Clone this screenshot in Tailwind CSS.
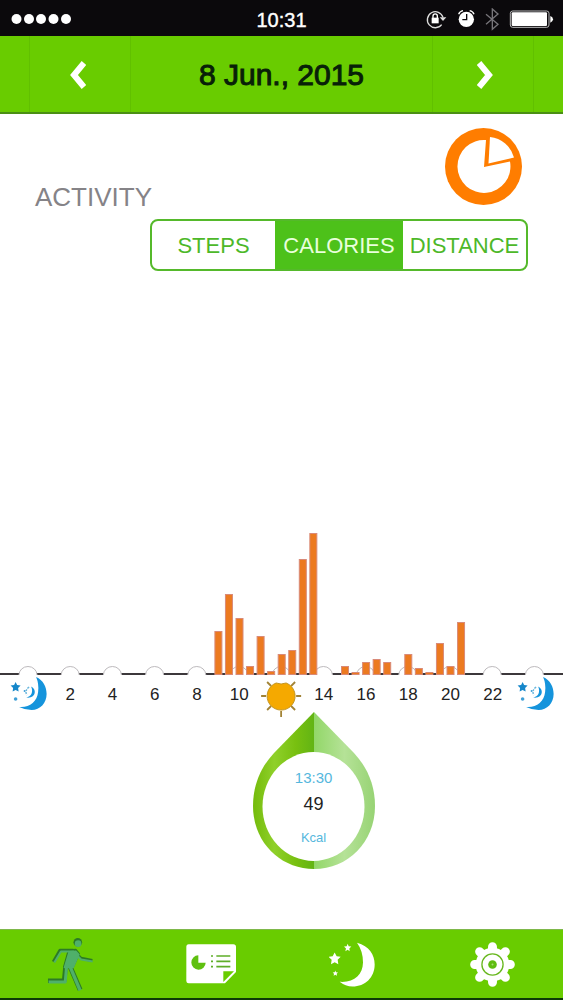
<!DOCTYPE html>
<html lang="en">
<head>
<meta charset="utf-8">
<meta name="viewport" content="width=device-width, initial-scale=1">
<title>Activity</title>
<script src="https://cdn.jsdelivr.net/npm/@tailwindcss/browser@4"></script>
</head>
<body class="flex min-h-screen flex-col bg-white font-['Liberation_Sans',Arial,sans-serif] text-[#222]">

  <!-- Status bar -->
  <div class="grid h-9 grid-cols-3 items-center bg-[#0b090c] pt-1 text-white">
    <svg class="ml-[11px] h-3 w-[61px]" viewBox="0 0 61 12" fill="#fff" aria-hidden="true">
      <circle cx="5.500" cy="5" r="5"/><circle cx="18" cy="5" r="5"/><circle cx="30" cy="5" r="5"/><circle cx="42.500" cy="5" r="5"/><circle cx="55" cy="5" r="5"/>
    </svg>
    <span class="text-center text-xl leading-8 [-webkit-text-stroke:0.4px_#fff]">10:31</span>
    <svg class="mr-[9px] h-[25px] w-[130px] justify-self-end" viewBox="430 24 390 75" fill="none" aria-hidden="true">
      <path d="M483 74A24 24 0 1 1 487 52" stroke="#ddd" stroke-width="4"/>
      <path d="M477 52h20l-10 11z" fill="#ddd"/>
      <rect x="453" y="53" width="21" height="17" fill="#fff"/>
      <path d="M457 54v-6a6.500 6.500 0 0 1 13 0v6" stroke="#fff" stroke-width="4"/>
      <circle cx="557" cy="58" r="23" fill="#fff"/>
      <path d="M534 43q3-9 13-11M567 32q10 2 13 11" stroke="#fff" stroke-width="4"/>
      <path d="M558 42v17h-13" stroke="#0b090c" stroke-width="4"/>
      <path d="M616 43l36 30-17 15V27l17 15-36 31" stroke="#77757a" stroke-width="4"/>
      <rect x="689" y="33" width="116" height="49" rx="7" stroke="#bbb" stroke-width="3"/>
      <rect x="693" y="37" width="106" height="41" rx="3" fill="#fff"/>
      <path d="M809 48q8 2 8 10t-8 10z" fill="#fff"/>
    </svg>
  </div>

  <!-- Date navigation -->
  <header class="flex h-[78px] items-stretch justify-between border-b-2 border-[#4b8f14] bg-[#69cc00] px-[29px]">
    <button type="button" aria-label="Previous day" class="flex w-[102px] items-center justify-center border-x border-[#61c000] pt-0.5 pr-1">
      <svg class="h-7 w-4" viewBox="0 0 16 28" fill="none" stroke="#fff" stroke-width="6"><path d="M14 2L4 14l10 12"/></svg>
    </button>
    <h1 class="self-center pt-0.5 text-[30px] leading-9 text-[#082008] [-webkit-text-stroke:1px_#082008]">8 Jun., 2015</h1>
    <button type="button" aria-label="Next day" class="flex w-[102px] items-center justify-center border-x border-[#61c000] pt-0.5 pl-1">
      <svg class="h-7 w-4" viewBox="0 0 16 28" fill="none" stroke="#fff" stroke-width="6"><path d="M2 2l10 12L2 26"/></svg>
    </button>
  </header>

  <main class="flex grow flex-col">
    <div class="flex items-end justify-between pt-[14px] pr-[41px] pl-[35px]">
      <h2 class="text-[26px] leading-4 text-[#858387]">ACTIVITY</h2>
      <svg class="h-[77px] w-[77px]" viewBox="0 0 77 77" aria-hidden="true">
        <circle cx="38.500" cy="38.500" r="38.500" fill="#ff7d00"/>
        <path d="M39 39L41 12A26.500 26.500 0 1 0 65 33.500Z" fill="#fff"/>
        <path d="M43.500 35.500L45 9A28 28 0 0 1 69 29.500Z" fill="#fff"/>
      </svg>
    </div>

    <div class="mt-[14px] mr-[35px] ml-auto flex h-[52px] w-[378px] overflow-hidden rounded-lg border-2 border-[#55b92b] text-[22px] text-[#4db829]" role="group" aria-label="Metric">
      <button type="button" class="flex-1">STEPS</button>
      <button type="button" class="w-32 bg-[#4dc11a] text-[#e9ffdc]" aria-pressed="true">CALORIES</button>
      <button type="button" class="flex-1">DISTANCE</button>
    </div>

    <!-- Calories per half hour -->
    <svg class="mt-[249px] w-full overflow-visible" viewBox="0 0 563 156" role="img" aria-label="Calories burned per half hour">
      <path d="M0 154H563" stroke="#3c383b" stroke-width="2"/>
      <g id="ticks" fill="#fff" stroke="#bdbabd" stroke-width="1"></g>
      <g id="bars" fill="#ec7a20" stroke="#d98a78" stroke-width="1"></g>
    </svg>

    <div class="grid grid-cols-[repeat(13,minmax(0,1fr))] items-center px-[7px] text-center text-[17px] leading-[38px]">
      <svg class="h-[38px] w-full overflow-visible" viewBox="0 0 42 38" aria-label="Midnight">
        <path d="M29 1C36 4 39.500 11 39.500 18C39.500 27 33 34 24.500 34Q18 34 12 31C22 32 30 26 31 16Q32 8 29 1Z" fill="#1594dc"/>
        <path d="M24 10.500C30 13 29 23 19 21.500C24 21 26.500 16 24 10.500Z" fill="#1594dc"/>
        <path d="M22 11q-5 4-2 8" fill="none" stroke="#69b6dc" stroke-width="1.500" stroke-dasharray="2 1"/>
        <path d="M8.500 6l1.500 3 3.500.5-2.500 2.500.5 3.500-3-1.500-3 1.500.5-3.500L3.500 9.500 7 9z" fill="#1687ca"/>
        <circle cx="8.500" cy="23" r="1.800" fill="#3f9fd6"/><circle cx="17.500" cy="15" r="1" fill="#3f9fd6"/>
      </svg>
      <span>2</span><span>4</span><span>6</span><span>8</span><span>10</span>
      <svg class="h-[38px] w-full overflow-visible" viewBox="0 0 42 38" aria-label="Noon">
        <path d="M21 35v6M6 20H1M36 20h5M11 30l-4 4M31 30l4 4M11 10L7 6M31 10l4-4" stroke="#a28336" stroke-width="1.800"/>
        <path d="M16 7Q21 9 26 7A14 14 0 1 1 16 7Z" fill="#f5a900" stroke="#c39420" stroke-width="1"/>
      </svg>
      <span>14</span><span>16</span><span>18</span><span>20</span><span>22</span>
      <svg class="h-[38px] w-full overflow-visible" viewBox="0 0 42 38" aria-label="Midnight">
        <path d="M29 1C36 4 39.500 11 39.500 18C39.500 27 33 34 24.500 34Q18 34 12 31C22 32 30 26 31 16Q32 8 29 1Z" fill="#1594dc"/>
        <path d="M24 10.500C30 13 29 23 19 21.500C24 21 26.500 16 24 10.500Z" fill="#1594dc"/>
        <path d="M22 11q-5 4-2 8" fill="none" stroke="#69b6dc" stroke-width="1.500" stroke-dasharray="2 1"/>
        <path d="M8.500 6l1.500 3 3.500.5-2.500 2.500.5 3.500-3-1.500-3 1.500.5-3.500L3.500 9.500 7 9z" fill="#1687ca"/>
        <circle cx="8.500" cy="23" r="1.800" fill="#3f9fd6"/><circle cx="17.500" cy="15" r="1" fill="#3f9fd6"/>
      </svg>
    </div>

    <!-- Selected half hour -->
    <div class="-mt-0.5 ml-[55.7%] grid h-[157px] w-[124px] -translate-x-1/2">
      <svg class="col-start-1 row-start-1 h-[157px] w-[124px]" viewBox="0 0 124 157" aria-hidden="true">
        <defs>
          <linearGradient id="dark"><stop offset="0" stop-color="#74bb0b"/><stop offset=".35" stop-color="#8fd02a"/><stop offset=".7" stop-color="#78c010"/><stop offset="1" stop-color="#62b414"/></linearGradient>
          <linearGradient id="light"><stop offset="0" stop-color="#92d768"/><stop offset=".5" stop-color="#b5e297"/><stop offset="1" stop-color="#97d374"/></linearGradient>
        </defs>
        <path d="M62 0L22 41C8 56 1 74 1 94C1 130 28 157 62 157Z" fill="url(#dark)"/>
        <path d="M62 0L102 41C116 56 123 74 123 94C123 130 96 157 62 157Z" fill="url(#light)"/>
        <ellipse cx="61.500" cy="94.500" rx="51" ry="54.500" fill="#fff"/>
      </svg>
      <div class="col-start-1 row-start-1 flex flex-col items-center pt-14 text-[#55b7dd]">
        <span class="text-[15px] leading-5">13:30</span>
        <span class="mt-1 text-lg leading-6 text-[#222]">49</span>
        <span class="mt-3 text-[13px] leading-5">Kcal</span>
      </div>
    </div>
  </main>

  <nav class="grid h-[71px] grid-cols-4 border-t border-b-2 border-t-[#7fb84a] border-b-[#0c3a06] bg-[#69cc00]" aria-label="Sections">
    <a href="#activity" aria-label="Activity" aria-current="page" class="flex items-center justify-center">
      <svg class="h-[57px] w-12" viewBox="140 45 145 172" fill="none" stroke-linejoin="round">
        <g stroke="#2c7a26">
          <circle cx="236" cy="64" r="13" fill="#2c7a26" stroke="none"/>
          <path d="M162 123L182 88H222L246 112L280 119" stroke-width="9"/>
          <path d="M208 88L230 86L240 98L222 138H194Z" fill="#2c7a26" stroke-width="5"/>
          <path d="M199 138L195 180H146" stroke-width="14"/>
          <path d="M213 138L243 207" stroke-width="15"/>
        </g>
        <g stroke="#4fb06a">
          <circle cx="237" cy="68" r="10" fill="#4fb06a" stroke="none"/>
          <path d="M165 125L185 92H223L246 116L281 122" stroke-width="6"/>
          <path d="M210 93L230 91L239 101L222 140H196Z" fill="#4fb06a" stroke-width="5"/>
          <path d="M202 138L198 184H148" stroke-width="9"/>
          <path d="M213 138L243 209" stroke-width="10"/>
        </g>
      </svg>
    </a>
    <a href="#reports" aria-label="Reports" class="flex items-center justify-center">
      <svg class="h-10 w-[50px]" viewBox="557 71 150 120">
        <path d="M565 72H699q8 0 8 8V155L674 189H565q-7 0-7-7V80q0-8 7-8Z" fill="#fff"/>
        <path d="M669 153H701L669 185Z" fill="#69cc00"/>
        <path d="M594 105V127H616A21.500 21.500 0 1 1 594 105Z" fill="#5fc010"/>
        <path d="M648 107H690M648 123H690M648 139H690" stroke="#5fae28" stroke-width="5"/>
        <path d="M632 107h6M632 123h6M632 139h6" stroke="#5fae28" stroke-width="5"/>
      </svg>
    </a>
    <a href="#sleep" aria-label="Sleep" class="flex items-center justify-center">
      <svg class="h-[45px] w-[46px]" viewBox="147 64 138 134" fill="#fff">
        <path d="M231 66C268 76 284 102 284 131C284 170 255 197 218 197Q196 197 179 183C223 186 248 162 249 125Q249 91 231 66Z"/>
        <path d="M164 95l6 11 12 2-9 9 2 13-11-6-11 6 2-13-9-9 12-2z"/>
        <path d="M203 69l3 7 8 1-6 6 1 8-6-4-7 4 2-8-6-6 8-1z"/>
        <path d="M166 149l2 5 6 1-4 4 1 6-5-3-5 3 1-6-4-4 6-1z"/>
      </svg>
    </a>
    <a href="#settings" aria-label="Settings" class="flex items-center justify-center">
      <svg class="h-[45px] w-[45px]" viewBox="0 0 136 136" fill="none">
        <circle cx="68" cy="68" r="51" fill="#fff"/>
        <path d="M68 14V122M14 68H122M29 29L107 107M107 29L29 107" stroke="#fff" stroke-width="27" stroke-linecap="round"/>
        <circle cx="68" cy="68" r="32" stroke="#69b820" stroke-width="4"/>
        <circle cx="68" cy="68" r="13" fill="#5fbd10"/>
        <circle cx="68" cy="68" r="3" fill="#a9dc74"/>
      </svg>
    </a>
  </nav>

<script>
  // [hour, bar height]
  const data = [[9,43],[9.5,80],[10,56],[10.5,8],[11,38],[11.5,3],[12,20],[12.5,24],[13,115],[13.5,141],
    [15,8],[15.5,2],[16,12],[16.5,15],[17,12],[18,20],[18.5,6],[19,2],[19.5,31],[20,8],[20.5,52]];
  const x = h => 28 + h * 21.1;
  let ticks = '';
  for (let h = 0; h <= 24; h += 2) {
    ticks += `<circle cx="${x(h)}" cy="156" r="9" stroke="none"/><path d="M${x(h) - 9} 155A9 8.500 0 0 1 ${x(h) + 9} 155"/>`;
  }
  document.getElementById('ticks').innerHTML = ticks;
  document.getElementById('bars').innerHTML = data
    .map(([h, v]) => `<rect x="${x(h) - 3}" y="${154.5 - v}" width="7" height="${v}"/>`).join('');
</script>
</body>
</html>
